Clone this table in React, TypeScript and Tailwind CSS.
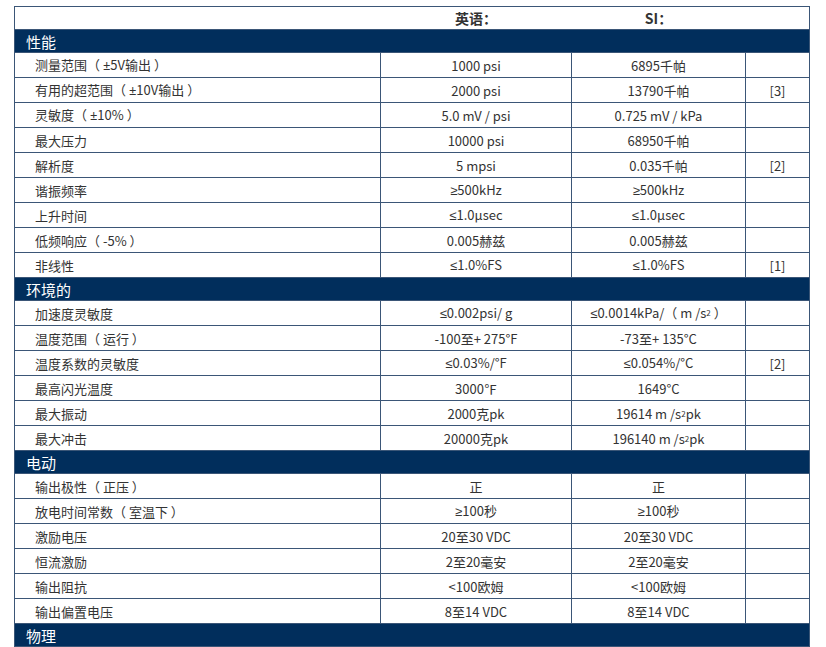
import React from "react";

type Row = { label: React.ReactNode; key: string; en: React.ReactNode; si: React.ReactNode; note?: string };
type Section = { title: string; rows: Row[] };

const sq = <sup className="text-[8px] relative -top-[2px]">2</sup>;

// ±, ≤, ≥ come from a Latin font, the CJK font draws them too wide
const sym = (s: string) => (
    <span style={{ fontFamily: '"Noto Sans", sans-serif' }}>{s}</span>
);

const fix = (text: string) =>
    text.split(/([±≤≥])/).map((part, i) =>
        /[±≤≥]/.test(part) ? <React.Fragment key={i}>{sym(part)}</React.Fragment> : part,
    );

const r = (label: string, en: React.ReactNode, si: React.ReactNode, note?: string): Row => ({
    key: label,
    label: fix(label),
    en: typeof en === "string" ? fix(en) : en,
    si: typeof si === "string" ? fix(si) : si,
    note,
});

const sections: Section[] = [
    {
        title: "性能",
        rows: [
            r("测量范围（ ±5V输出 ）", "1000 psi", "6895千帕"),
            r("有用的超范围（ ±10V输出 ）", "2000 psi", "13790千帕", "[3]"),
            r("灵敏度（ ±10% ）", "5.0 mV / psi", "0.725 mV / kPa"),
            r("最大压力", "10000 psi", "68950千帕"),
            r("解析度", "5 mpsi", "0.035千帕", "[2]"),
            r("谐振频率", "≥500kHz", "≥500kHz"),
            r("上升时间", "≤1.0μsec", "≤1.0μsec"),
            r("低频响应（ -5% ）", "0.005赫兹", "0.005赫兹"),
            r("非线性", "≤1.0%FS", "≤1.0%FS", "[1]"),
        ],
    },
    {
        title: "环境的",
        rows: [
            r("加速度灵敏度", "≤0.002psi/ g", <>{sym("≤")}0.0014kPa/（ m /s{sq} ）</>),
            r("温度范围（ 运行 ）", "-100至+ 275°F", "-73至+ 135°C"),
            r("温度系数的灵敏度", "≤0.03%/°F", "≤0.054%/°C", "[2]"),
            r("最高闪光温度", "3000℉", "1649°C"),
            r("最大振动", "2000克pk", <>19614 m /s{sq}pk</>),
            r("最大冲击", "20000克pk", <>196140 m /s{sq}pk</>),
        ],
    },
    {
        title: "电动",
        rows: [
            r("输出极性（ 正压 ）", "正", "正"),
            r("放电时间常数（ 室温下 ）", "≥100秒", "≥100秒"),
            r("激励电压", "20至30 VDC", "20至30 VDC"),
            r("恒流激励", "2至20毫安", "2至20毫安"),
            r("输出阻抗", "<100欧姆", "<100欧姆"),
            r("输出偏置电压", "8至14 VDC", "8至14 VDC"),
        ],
    },
    { title: "物理", rows: [] },
];

export default function App() {
    return (
        <div
            className="w-[826px] h-[647px] overflow-hidden bg-white pt-[6px] pl-[14px]"
            style={{ fontFamily: '"Noto Sans CJK SC", "Noto Sans", sans-serif' }}
        >
            <table className="table-fixed border-collapse w-[795px] text-[13px] text-[#333]">
                <colgroup>
                    <col className="w-[366px]" />
                    <col className="w-[191px]" />
                    <col className="w-[174px]" />
                    <col className="w-[64px]" />
                </colgroup>
                <tbody>
                    <tr className="h-[23px] border border-[#3b5677]">
                        <td></td>
                        <td className="text-center font-bold text-[14px] leading-[21px] text-[#333]">英语：</td>
                        <td className="text-center font-bold text-[14px] leading-[21px] text-[#333]">SI：</td>
                        <td></td>
                    </tr>
                    {sections.map((section) => (
                        <React.Fragment key={section.title}>
                            <tr className="h-[23px] bg-[#012e5c]">
                                <td
                                    colSpan={4}
                                    className="border border-[#3b5677] pl-[11px] text-[15px] leading-[21px] text-white"
                                >
                                    {section.title}
                                </td>
                            </tr>
                            {section.rows.map((row) => (
                                <tr key={row.key} className="h-[25px]">
                                    <td className="border border-[#3b5677] pl-[20px] leading-[23px]">
                                        {row.label}
                                    </td>
                                    <td className="border border-[#3b5677] text-center leading-[23px]">
                                        {row.en}
                                    </td>
                                    <td className="border border-[#3b5677] text-center leading-[23px]">
                                        {row.si}
                                    </td>
                                    <td className="border border-[#3b5677] text-center leading-[23px]">
                                        {row.note}
                                    </td>
                                </tr>
                            ))}
                        </React.Fragment>
                    ))}
                </tbody>
            </table>
        </div>
    );
}
